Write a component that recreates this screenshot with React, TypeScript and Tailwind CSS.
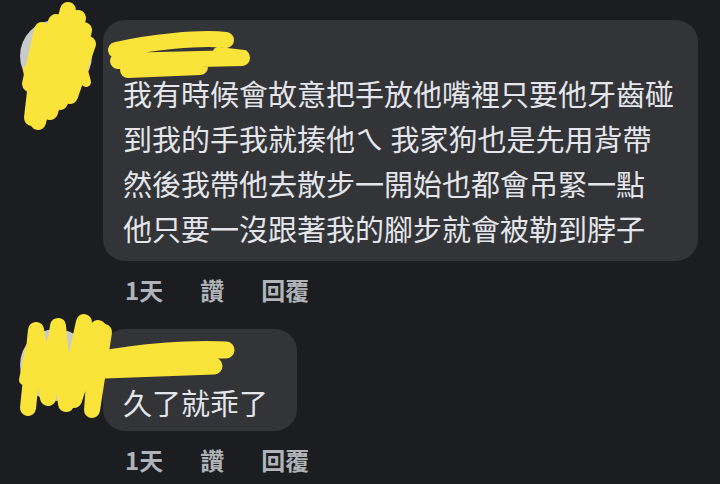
import React from "react"

const font = { fontFamily: '"Noto Sans CJK TC", "Noto Sans", sans-serif' }

function Avatar() {
  return (
    <div className="relative w-[72px] h-[72px] shrink-0">
      <div className="w-full h-full rounded-full bg-[#c9cacc]" />
      <span className="absolute right-[2px] bottom-[6px] w-[15px] h-[15px] rounded-full bg-[#31a24c] border-[3px] border-[#1c1d20]" />
    </div>
  )
}

function Actions() {
  return (
    <div className="flex gap-[37px] pl-[125px] mt-[10px] leading-[38px] text-[24px] font-bold text-[#b0b3b8]">
      <span>1天</span>
      <span>讚</span>
      <span>回覆</span>
    </div>
  )
}

export default function App() {
  return (
    <div className="relative w-[720px] h-[484px] overflow-hidden bg-[#1c1d20]" style={font}>
      <div className="flex flex-col pt-5">
        {/* --- COMMENT 1 --- */}
        <div className="flex items-start pl-5 gap-[11px]">
          <Avatar />
          <div className="w-[595px] rounded-[22px] bg-[#333437] px-5 pt-[12px] pb-[10px]">
            <div className="h-[39px]" />
            <p className="text-[29px] leading-[45px] text-[#e4e6eb]">
              我有時候會故意把手放他嘴裡只要他牙齒碰
              <br />
              到我的手我就揍他ㄟ 我家狗也是先用背帶
              <br />
              然後我帶他去散步一開始也都會吊緊一點
              <br />
              他只要一沒跟著我的腳步就會被勒到脖子
            </p>
          </div>
        </div>
        <Actions />

        {/* --- COMMENT 2 --- */}
        <div className="flex items-start pl-5 gap-[11px] mt-[20px]">
          <Avatar />
          <div className="w-[194px] rounded-[22px] bg-[#333437] px-5 pt-[13px] pb-[6px]">
            <div className="h-[38px]" />
            <p className="text-[29px] leading-[45px] text-[#e4e6eb]">久了就乖了</p>
          </div>
        </div>
        <Actions />
      </div>

      {/* yellow marker scribbles over names and avatars */}
      <svg className="absolute inset-0 pointer-events-none" width="720" height="484" viewBox="0 0 720 484">
        <g fill="none" stroke="#fbe43a" strokeLinecap="round" strokeLinejoin="round">
          <path strokeWidth="16" d="M30,84 L42,30 L32,118 L56,22 L38,122 L68,10 L50,112 L78,18 L60,102 L84,30 L70,96 L88,44" />
          <path strokeWidth="10" d="M28,70 L36,110 M80,60 L86,82" />
          <path strokeWidth="16" d="M116,50 C150,42 200,37 226,40 M118,61 L242,58 M128,70 L200,67" />
          <path strokeWidth="10" d="M218,52 L244,55" />
          <path strokeWidth="16" d="M28,408 L36,330 L48,398 L58,326 L66,404 L84,322 L74,400 L98,328 L92,410 L104,332" />
          <path strokeWidth="10" d="M24,380 L30,350 M44,370 L52,340" />
          <path strokeWidth="17" d="M98,360 C140,352 190,348 226,350 M104,370 L214,366" />
        </g>
      </svg>
    </div>
  )
}
